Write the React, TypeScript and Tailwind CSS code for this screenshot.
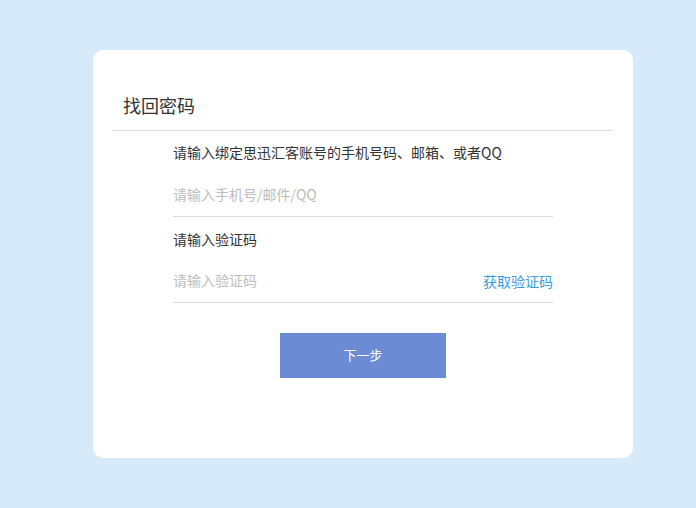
import { useState } from "react"

const font = { fontFamily: '"Noto Sans CJK SC", "Noto Sans", sans-serif' }

export default function App() {
  const [account, setAccount] = useState("")
  const [code, setCode] = useState("")

  return (
    <div className="w-[696px] h-[508px] bg-[#d6eaf9] pt-[50px] pl-[93px]" style={font}>
      <div className="w-[540px] h-[408px] bg-white rounded-[10px] pt-[43px]">
        <div className="mx-5 border-b border-[#d9d9d9] pb-[13px] pl-[10px]">
          <h1 className="text-[18px] leading-6 text-[#333]">找回密码</h1>
        </div>

        <div className="w-[380px] ml-[80px]">
          <label className="block mt-[11px] text-[14px] leading-5 text-[#333]">
            请输入绑定思迅汇客账号的手机号码、邮箱、或者QQ
          </label>
          <div className="mt-[15px] h-10 border-b border-[#d9d9d9] flex items-center pb-1">
            <input
              value={account}
              onChange={(e) => setAccount(e.target.value)}
              placeholder="请输入手机号/邮件/QQ"
              className="w-full outline-none text-[14px] text-[#333] placeholder:text-[#bdbdbd]"
            />
          </div>

          <label className="block mt-3 text-[14px] leading-5 text-[#333]">请输入验证码</label>
          <div className="mt-[14px] h-10 border-b border-[#d9d9d9] flex items-center pb-1">
            <input
              value={code}
              onChange={(e) => setCode(e.target.value)}
              placeholder="请输入验证码"
              className="flex-1 outline-none text-[14px] text-[#333] placeholder:text-[#bdbdbd]"
            />
            <button className="text-[14px] text-[#3a9be3] pt-[2px]">获取验证码</button>
          </div>
        </div>

        <div className="flex justify-center mt-[30px]">
          <button className="w-[166px] h-[45px] bg-[#6c8bd5] text-white text-[13px] pb-[2px]">下一步</button>
        </div>
      </div>
    </div>
  )
}
